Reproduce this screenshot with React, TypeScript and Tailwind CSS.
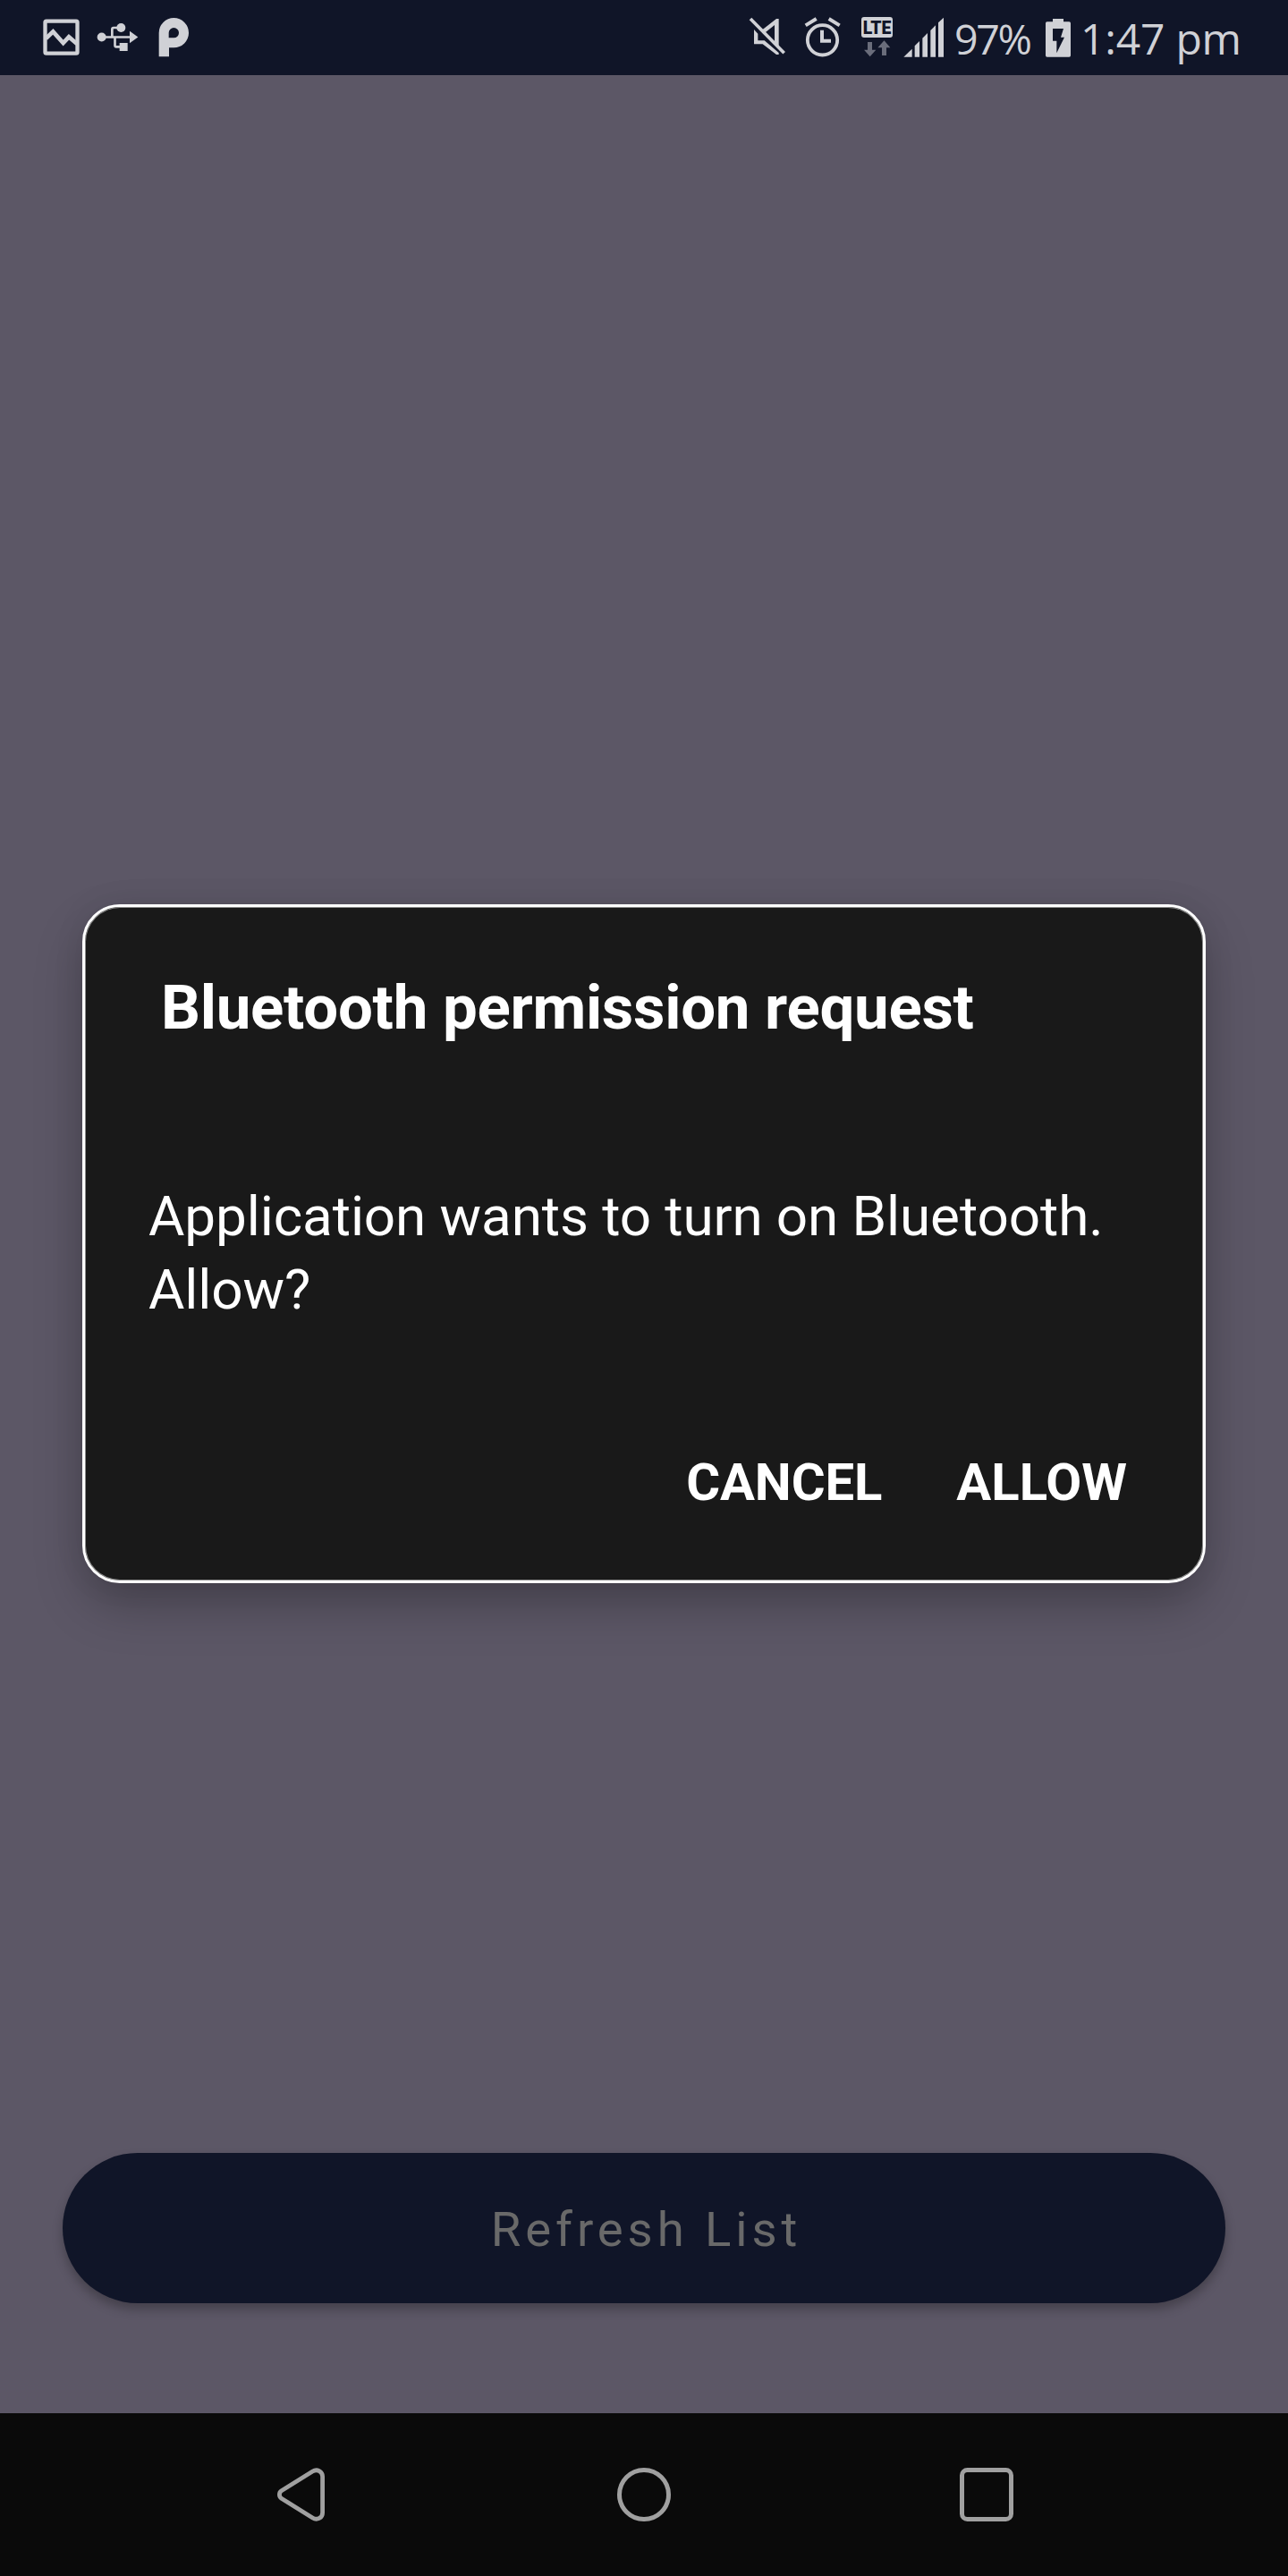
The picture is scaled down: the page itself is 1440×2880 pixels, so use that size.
import React from 'react';

function ImageIcon() {
  return (
    <svg className="h-[84px] w-[67px]" viewBox="0 0 201 252" fill="none" stroke="#d0d1d6">
      <rect x="61.5" y="71" width="108" height="108" rx="4" strokeWidth="13" />
      <path d="M64 129 L88 106 L122 144 L141 124 L168 147" strokeWidth="14" />
    </svg>
  );
}

function UsbIcon() {
  return (
    <svg className="h-[84px] w-[66px]" viewBox="201 0 198 252">
      <g fill="#d0d1d6">
        <circle cx="251" cy="124.500" r="15" />
        <circle cx="316" cy="93" r="15" />
        <rect x="311" y="144" width="27" height="27" />
        <path d="M345 104 L373 124.500 L345 145 Z" />
      </g>
      <g fill="none" stroke="#d0d1d6" strokeWidth="8">
        <path d="M251 124.500 H348" />
        <path d="M316 93 H291 Q286 93 286 98 V124" />
        <path d="M295.500 124 V152 Q295.500 157 300 157 H312" />
      </g>
    </svg>
  );
}

function PIcon() {
  return (
    <svg className="h-[84px] w-[67px]" viewBox="399 0 201 252" fill="#d0d1d6" fillRule="evenodd">
      <path d="M443 190 V110 A50 50 0 1 1 493 160 H477 V190 Z M476 127 V110 A17 17 0 1 1 493 127 Z" />
    </svg>
  );
}

function MuteIcon() {
  return (
    <svg className="h-[84px] w-[67px]" viewBox="0 0 201 252" fill="#d0d1d6">
      <path d="M95 101 L144 63 H152 V154 L138 142 V84 L107 109 Z" />
      <path d="M69 99 L82 113 V136 H104 L152 177 V183 H144 L98 148 H69 Z" />
      <path d="M57 63 L170 178" stroke="#d0d1d6" strokeWidth="11" />
    </svg>
  );
}

function AlarmIcon() {
  return (
    <svg className="h-[84px] w-[66px]" viewBox="201 0 198 252" fill="none" stroke="#d0d1d6">
      <circle cx="298.500" cy="134.500" r="50" strokeWidth="11.500" />
      <path d="M297 101 V137.500 H327" strokeWidth="12" />
      <path d="M242 85 L278 63 M320 63 L356 85" strokeWidth="12" />
    </svg>
  );
}

function LteIcon() {
  return (
    <svg className="h-[84px] w-[50px]" viewBox="399 0 150 252">
      <rect x="429" y="57" width="105" height="69" rx="9" fill="#d0d1d6" />
      <text
        x="434"
        y="113"
        fontFamily="Roboto, sans-serif"
        fontWeight="900"
        fontSize="60"
        textLength="95"
        lengthAdjust="spacingAndGlyphs"
        fill="#101528"
      >
        LTE
      </text>
      <g fill="#6a6d7b">
        <path d="M450 141 H465 V167 H478 L458 190 L438 167 H450 Z" />
        <path d="M498 186 H513 V160 H526 L505.500 136 L484 160 H498 Z" />
      </g>
    </svg>
  );
}

function SignalIcon() {
  return (
    <svg className="h-[84px] w-[57px]" viewBox="549 0 171 252" fill="#d0d1d6">
      <path d="M571 191 L599 164 V191 Z" />
      <path d="M608 191 V154 L624 138 V191 Z" />
      <path d="M634 191 V128 L651 111 V191 Z" />
      <path d="M661 191 V102 L678 85 V191 Z" />
      <path d="M687 191 V76 L705 59 V191 Z" />
    </svg>
  );
}

function BatteryIcon() {
  return (
    <svg className="h-[84px] w-[32px]" viewBox="381 0 96 252">
      <path
        d="M411 63 H447 V73 H466 Q471 73 471 78 V186 Q471 191 466 191 H392 Q387 191 387 186 V78 Q387 73 392 73 H411 Z"
        fill="#d0d1d6"
      />
      <path d="M411 96 H447 L438 125 H450 L424 178 V137 H411 Z" fill="#101528" />
    </svg>
  );
}

function StatusBar() {
  return (
    <header className="flex h-[84px] justify-between bg-[#101528] pl-[30px] pr-[52px] font-['Open_Sans',sans-serif] text-[#d0d1d6]">
      <div className="flex">
        <ImageIcon />
        <UsbIcon />
        <PIcon />
      </div>
      <div className="flex w-[568px] whitespace-nowrap leading-[86px]">
        <MuteIcon />
        <AlarmIcon />
        <LteIcon />
        <SignalIcon />
        <span className="w-[107px] shrink-0 pl-[7px] text-[46.5px] tracking-[-2.4px]">97%</span>
        <BatteryIcon />
        <span className="pl-[9px] text-[48px] tracking-[-0.2px]">1:47 pm</span>
      </div>
    </header>
  );
}

function PermissionDialog() {
  return (
    <section className="mx-[92px] mt-[927px] h-[759px] rounded-[42px] border-[3px] border-white bg-[#191919] pt-[73px] text-white shadow-[0_26px_56px_-4px_rgba(0,0,0,0.27),0_0_36px_rgba(0,0,0,0.07),inset_0_0_0_1px_rgba(255,255,255,0.5)]">
      <h1 className="pl-[85px] text-[69px] font-bold leading-[80px] tracking-[-0.28px]">
        Bluetooth permission request
      </h1>
      <p className="mt-[152px] pl-[71px] text-[62px] leading-[82px] tracking-[-0.1px]">
        Application wants to turn on Bluetooth.
        <br />
        Allow?
      </p>
      <div className="mt-[134px] flex justify-end gap-[83px] pr-[85px] text-[58px] font-bold leading-[80px]">
        <button className="tracking-[-0.1px]">CANCEL</button>
        <button>ALLOW</button>
      </div>
    </section>
  );
}

function NavigationBar() {
  return (
    <nav className="flex h-[182px] items-center gap-[323.5px] bg-[#0a0a0a] pl-[306px]">
      <svg className="size-[60px]" viewBox="0 0 60 60" fill="none" stroke="#a0a0a0" strokeWidth="4.800">
        <path d="M8.600 25.800 L43.500 4 C48.500 0.900 54.600 4 54.600 9.800 V50.200 C54.600 56 48.500 59.100 43.500 56 L8.600 34.200 C5.700 32.300 5.700 27.700 8.600 25.800 Z" />
      </svg>
      <svg className="size-[60px]" viewBox="0 0 60 60" fill="none" stroke="#a0a0a0" strokeWidth="5">
        <circle cx="30" cy="30" r="27.500" />
      </svg>
      <svg className="size-[60px]" viewBox="0 0 60 60" fill="none" stroke="#a0a0a0" strokeWidth="5">
        <rect x="2.500" y="2.500" width="55" height="55" rx="6" />
      </svg>
    </nav>
  );
}

export default function App() {
  return (
    <div className="flex h-[2880px] w-[1440px] flex-col overflow-hidden bg-[#5c5766] font-['Roboto',sans-serif]">
      <StatusBar />
      <main className="flex flex-1 flex-col">
        <PermissionDialog />
        <button className="mx-[70px] mb-[123px] mt-auto h-[168px] rounded-full bg-[#101528] pl-[5px] pt-[4px] text-[54.5px] tracking-[4.9px] text-[#696969] shadow-[0_7px_12px_rgba(0,0,0,0.26)]">
          Refresh List
        </button>
      </main>
      <NavigationBar />
    </div>
  );
}
